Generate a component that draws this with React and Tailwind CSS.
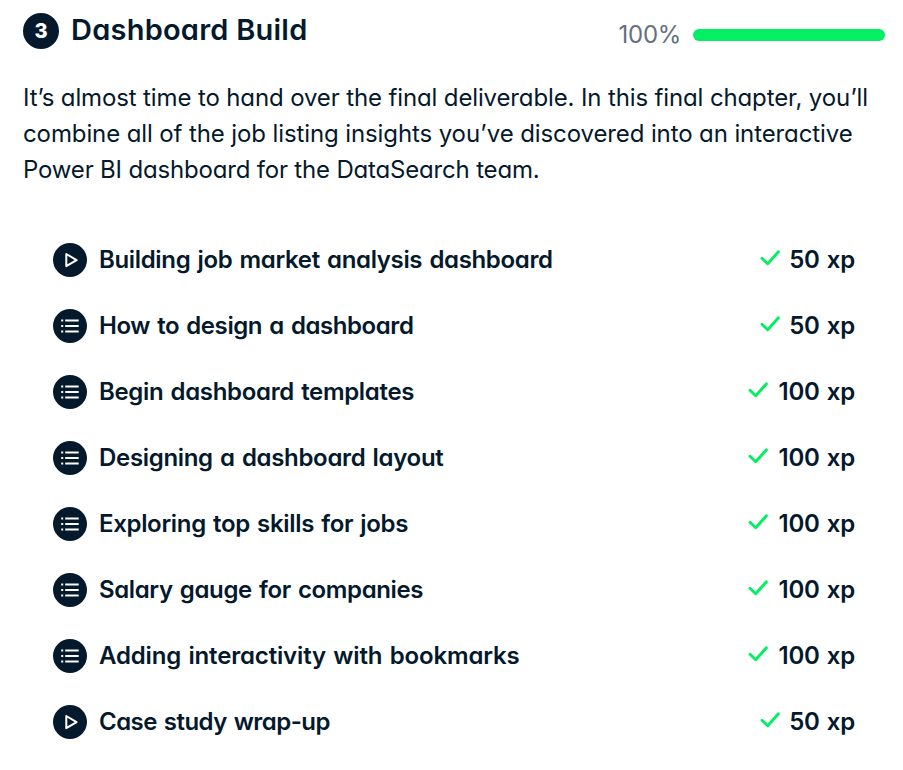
const description = [
  { text: "It’s almost time to hand over the final deliverable. In this final chapter, you’ll", tracking: "tracking-[-0.13px]" },
  { text: "combine all of the job listing insights you’ve discovered into an interactive", tracking: "tracking-[-0.11px]" },
  { text: "Power BI dashboard for the DataSearch team.", tracking: "tracking-[-0.18px]" },
];

const lessons = [
  { kind: "video", title: "Building job market analysis dashboard", xp: 50, tracking: "tracking-[-0.34px]" },
  { kind: "exercise", title: "How to design a dashboard", xp: 50, tracking: "tracking-[-0.42px]" },
  { kind: "exercise", title: "Begin dashboard templates", xp: 100, tracking: "tracking-[-0.33px]" },
  { kind: "exercise", title: "Designing a dashboard layout", xp: 100, tracking: "tracking-[-0.32px]" },
  { kind: "exercise", title: "Exploring top skills for jobs", xp: 100, tracking: "tracking-[-0.33px]" },
  { kind: "exercise", title: "Salary gauge for companies", xp: 100, tracking: "tracking-[-0.37px]" },
  { kind: "exercise", title: "Adding interactivity with bookmarks", xp: 100, tracking: "tracking-[-0.16px]" },
  { kind: "video", title: "Case study wrap-up", xp: 50, tracking: "tracking-[-0.55px]" },
];

function LessonIcon({ kind }) {
  return (
    <svg className="h-[34px] w-[34px] shrink-0" viewBox="0 0 34 34" fill="none" stroke="#fff" strokeWidth="2">
      <circle cx="17" cy="17" r="17" fill="#05192d" stroke="none" />
      {kind === "video" ? (
        <path d="M13.3 11v12.2L23.6 17.1z" strokeLinejoin="round" />
      ) : (
        <path d="M8.2 11.5h2M12.2 11.5h13.5M8.2 17h2M12.2 17h13.5M8.2 22.5h2M12.2 22.5h13.5" />
      )}
    </svg>
  );
}

function Check() {
  return (
    <svg className="mt-[-4px] h-5 w-5 shrink-0" viewBox="0 0 20 20" fill="none" stroke="#03ef62" strokeWidth="2.9" strokeLinecap="round" strokeLinejoin="round">
      <path d="M2 10.2L7.7 15.8L18.4 3.8" />
    </svg>
  );
}

export default function App() {
  return (
    <main className="h-[770px] w-[903px] overflow-hidden bg-white pl-[23px] pr-[18px] pt-3 font-['Inter',sans-serif] text-[24px] leading-[36px] text-[#05192d] [font-feature-settings:'cv11']">
      <header className="flex h-[38px] items-center justify-between">
        <div className="flex items-center">
          <span className="flex h-9 w-9 items-center justify-center rounded-full bg-[#05192d] text-[20px] font-extrabold text-white">3</span>
          <h2 className="-mt-[3px] ml-3 whitespace-nowrap text-[29px] font-semibold tracking-[0.23px]">Dashboard Build</h2>
        </div>
        <div className="mt-2 flex items-center">
          <span className="font-normal tracking-[-0.3px] text-[#65707c]">100%</span>
          <div className="ml-3 h-3 w-48 rounded-full bg-[#03ef62]" />
        </div>
      </header>
      <p className="mt-[30px] whitespace-nowrap">
        {description.map((line) => (
          <span key={line.text} className={`block ${line.tracking}`}>{line.text}</span>
        ))}
      </p>
      <ul className="mt-[39px] pl-[30px] pr-[30px]">
        {lessons.map((lesson) => (
          <li key={lesson.title} className="flex h-[66px] items-center justify-between font-semibold">
            <div className="flex items-center">
              <LessonIcon kind={lesson.kind} />
              <span className={`ml-3 whitespace-nowrap [word-spacing:1.5px] ${lesson.tracking}`}>{lesson.title}</span>
            </div>
            <div className="flex items-center">
              <Check />
              <span className={`whitespace-nowrap tracking-[-0.25px] [word-spacing:1.4px] ${lesson.xp === 100 ? "ml-[11px]" : "ml-[9px]"}`}>{lesson.xp} xp</span>
            </div>
          </li>
        ))}
      </ul>
    </main>
  );
}
